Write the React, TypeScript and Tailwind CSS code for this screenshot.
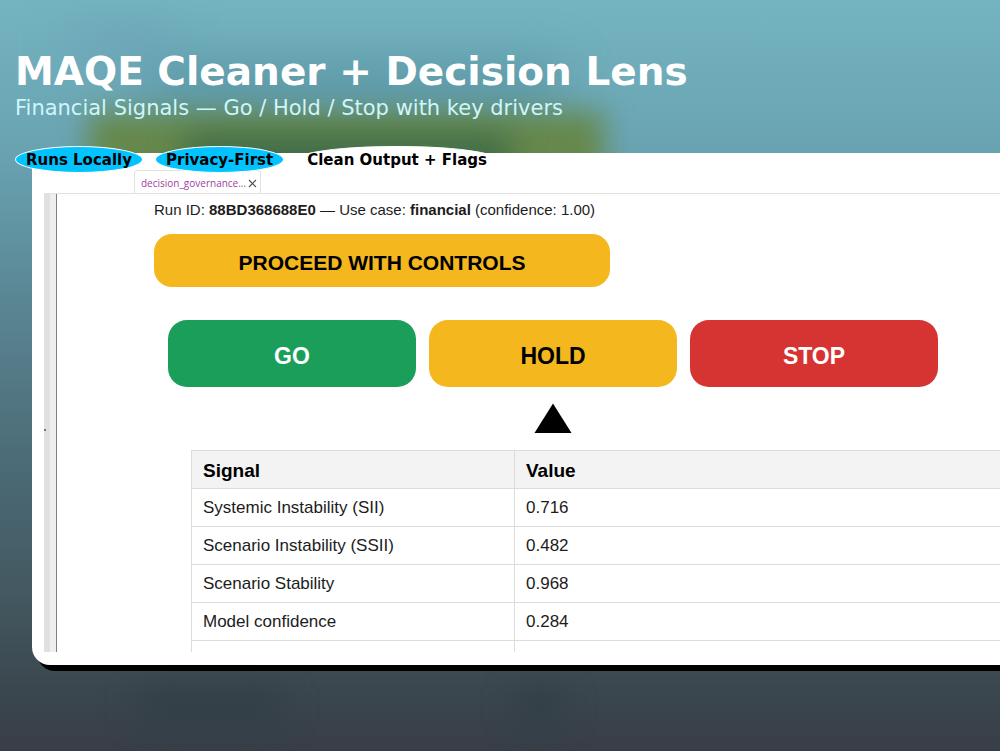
import type { ReactNode } from "react";

type Signal = { name: string; value: string };

const SIGNALS: Signal[] = [
  { name: "Systemic Instability (SII)", value: "0.716" },
  { name: "Scenario Instability (SSII)", value: "0.482" },
  { name: "Scenario Stability", value: "0.968" },
  { name: "Model confidence", value: "0.284" },
];

const DECISIONS = [
  { label: "GO", style: "bg-[#1b9e5a] text-white" },
  { label: "HOLD", style: "bg-[#f4b71e] text-black" },
  { label: "STOP", style: "bg-[#d63333] text-white" },
];

// Soft blobs behind everything
const Backdrop = () => (
  <div aria-hidden="true" className="absolute inset-0 overflow-hidden">
    <div className="absolute left-[70px] top-[24px] h-[40px] w-[100px] bg-[#6a9fb5]/60 blur-xl" />
    <div className="absolute left-[150px] top-[62px] h-[50px] w-[410px] bg-[#518d9b]/60 blur-xl" />
    <div className="absolute left-[88px] top-[112px] h-[110px] w-[516px] bg-[#66884c] blur-[14px]" />
    <div className="absolute left-[185px] top-[134px] h-[80px] w-[325px] bg-[#406c48] blur-[16px]" />
    <div className="absolute left-[140px] top-[688px] h-[34px] w-[142px] bg-[#2f3d45]/70 blur-lg" />
    <div className="absolute left-[518px] top-[688px] h-[34px] w-[42px] bg-[#2f3d45]/80 blur-lg" />
  </div>
);

const Pill = ({ className, children }: { className: string; children: ReactNode }) => (
  <li className={`rounded-[50%] border border-white px-[10px] pb-px pt-[2px] ${className}`}>{children}</li>
);

const SignalTable = () => (
  <table className="w-full table-fixed border-collapse text-left text-[17px] leading-[22px] text-[#1c1c1c]">
    <thead>
      <tr className="h-[38px] bg-[#f3f3f3] text-[19px] text-black">
        <th className="w-[323px] border border-[#dcdcdc] px-[11px] pt-[2px] font-bold">Signal</th>
        <th className="border-y border-[#dcdcdc] px-[11px] pt-[2px] font-bold">Value</th>
      </tr>
    </thead>
    <tbody>
      {SIGNALS.map((signal) => (
        <tr key={signal.name} className="h-[38px]">
          <td className="border border-[#dcdcdc] px-[11px]">{signal.name}</td>
          <td className="border-y border-[#dcdcdc] px-[11px]">{signal.value}</td>
        </tr>
      ))}
      {/* next row, cut off by the viewer */}
      <tr className="h-[11px]">
        <td className="border-x border-[#dcdcdc]" />
        <td />
      </tr>
    </tbody>
  </table>
);

const Report = () => (
  <div className="min-w-0 flex-1 pt-[7px] font-['Liberation_Sans',sans-serif]">
    <p className="ml-[97px] text-[15px] leading-[18px] text-[#1c1c1c]">
      Run ID: <b>88BD368688E0</b> — Use case: <b>financial</b> (confidence: 1.00)
    </p>

    <div className="ml-[97px] mt-[15px] flex h-[53px] w-[456px] items-center justify-center rounded-[18px] bg-[#f4b71e] pt-1 text-[21px] font-bold text-black">
      PROCEED WITH CONTROLS
    </div>

    <div className="ml-[111px] mr-[62px] mt-[33px] grid grid-cols-3 gap-x-[13px]">
      {DECISIONS.map(({ label, style }) => (
        <button key={label} type="button" className={`h-[67px] rounded-[19px] pt-[6px] text-[23px] font-bold ${style}`}>
          {label}
        </button>
      ))}
      <svg viewBox="0 0 38 30" className="col-start-2 mt-4 h-[30px] w-[38px] justify-self-center" aria-hidden="true">
        <path d="M19 0.5 37.5 30H0.5Z" fill="#000" />
      </svg>
    </div>

    <div className="ml-[134px] mt-[17px]">
      <SignalTable />
    </div>
  </div>
);

export default function App() {
  return (
    <main className="relative min-h-screen overflow-hidden bg-[linear-gradient(180deg,#74b4c0_0%,#69a3b2_20%,#5a8693_40%,#4b6b76_62%,#43575f_80%,#3a454d_93%,#383e47_100%)] font-['DejaVu_Sans',sans-serif]">
      <Backdrop />

      <div className="relative">
        <header className="px-[15px] pt-12">
          <h1 className="text-[39px] font-bold leading-[48px] text-white">MAQE Cleaner + Decision Lens</h1>
          <p className="text-[21px] leading-6 text-[#d0f5fa]">Financial Signals — Go / Hold / Stop with key drivers</p>
        </header>

        <ul className="relative z-10 mt-[26px] flex gap-3 px-[15px] text-[15px] font-bold leading-[22px] text-black">
          <Pill className="bg-[#00c3ff]">Runs Locally</Pill>
          <Pill className="bg-[#00c3ff]">Privacy-First</Pill>
          <Pill className="bg-white">Clean Output + Flags</Pill>
        </ul>

        <section className="-mt-5 ml-8 rounded-bl-[18px] bg-white pb-[13px] pl-3 pt-[17px] shadow-[5px_6px_0_#000]">
          <div className="flex border-b border-[#e2e2e2] pl-[90px]">
            <div className="flex h-[23px] w-[127px] items-center justify-between rounded-t-sm border border-b-0 border-[#e2e2e2] pl-[6px] pr-[3px] pt-[2px]">
              <button type="button" className="font-['Open_Sans',sans-serif] text-[10px] leading-4 text-[#a040a0]">
                decision_governance...
              </button>
              <button type="button" aria-label="Close tab">
                <svg viewBox="0 0 9 9" className="size-[9px]" fill="none" stroke="#555" strokeWidth="1.2">
                  <path d="M1 1l7 7M8 1l-7 7" />
                </svg>
              </button>
            </div>
          </div>

          <div className="flex">
            <div className="relative w-[13px] border-r border-[#808080] bg-[linear-gradient(90deg,#e0e0e0_50%,#eeeeee_50%)]">
              <span className="absolute left-0 top-[235px] size-[2px] rounded-full bg-[#555]" />
            </div>
            <Report />
          </div>
        </section>
      </div>
    </main>
  );
}
